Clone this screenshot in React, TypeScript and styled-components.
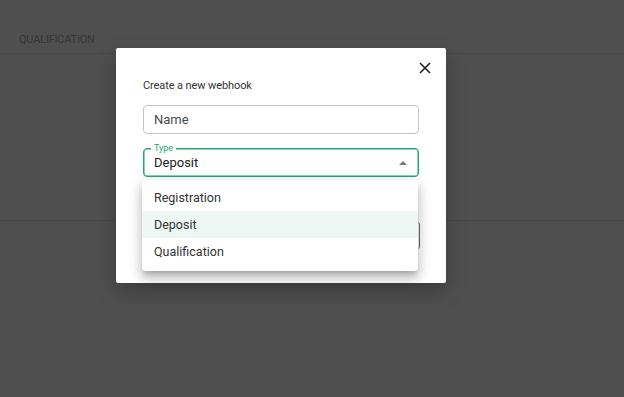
import React from 'react';
import styled, { createGlobalStyle } from 'styled-components';

const GlobalStyle = createGlobalStyle`
  html, body {
    margin: 0;
    padding: 0;
    background: #4f4f4f;
    font-family: Roboto, "Liberation Sans", Arial, sans-serif;
  }
`;

const green = '#22a673';

const Page = styled.div`
  position: relative;
  width: 624px;
  height: 397px;
  overflow: hidden;
  background: #4f4f4f;
`;

const TabBar = styled.div`
  display: flex;
  align-items: flex-end;
  height: 54px;
  padding: 0 0 7px 19px;
  box-sizing: border-box;
  border-bottom: 1px solid #474747;
`;

const Tab = styled.span`
  font-size: 11px;
  line-height: 13px;
  color: #363636;
  letter-spacing: -0.2px;
  text-transform: uppercase;
`;

const Section = styled.div`
  height: 166px;
  border-bottom: 1px solid #444444;
`;

const Dialog = styled.div`
  position: absolute;
  left: 116px;
  top: 48px;
  width: 330px;
  height: 235px;
  box-sizing: border-box;
  padding: 31px 27px 0 27px;
  background: #fff;
  border-radius: 2px;
  box-shadow: 0 8px 20px rgba(0, 0, 0, 0.25);
  display: flex;
  flex-direction: column;
`;

const CloseButton = styled.button`
  position: absolute;
  top: 12px;
  right: 13px;
  width: 16px;
  height: 16px;
  padding: 0;
  border: none;
  background: none;
  display: flex;
  align-items: center;
  justify-content: center;
`;

const Title = styled.div`
  font-size: 11px;
  line-height: 14px;
  color: #333;
  letter-spacing: -0.1px;
`;

const Field = styled.div<{ $focused?: boolean }>`
  position: relative;
  height: 29px;
  box-sizing: border-box;
  border: 1px solid ${({ $focused }) => ($focused ? green : '#c4c4c4')};
  box-shadow: ${({ $focused }) => ($focused ? `inset 0 0 0 0.5px ${green}` : 'none')};
  border-radius: 4px;
  display: flex;
  align-items: center;
  padding: 0 10px;
  margin-top: ${({ $focused }) => ($focused ? '14px' : '12px')};
`;

const FieldText = styled.span<{ $placeholder?: boolean }>`
  font-size: 13px;
  color: ${({ $placeholder }) => ($placeholder ? '#4a4a4a' : '#222')};
  flex: 1;
`;

const Legend = styled.span`
  position: absolute;
  top: -7px;
  left: 7px;
  padding: 0 3px;
  background: #fff;
  font-size: 9px;
  line-height: 12px;
  color: ${green};
`;

const Arrow = styled.span`
  width: 0;
  height: 0;
  border-left: 4px solid transparent;
  border-right: 4px solid transparent;
  border-bottom: 4px solid #777;
  margin-right: 1px;
`;

const Footer = styled.div`
  display: flex;
  justify-content: flex-end;
  margin-top: 45px;
  margin-right: -1px;
`;

const SubmitButton = styled.div`
  width: 80px;
  height: 27px;
  border-radius: 3px;
  background: #fff;
  border-right: 1px solid #6a6a6a;
`;

const Menu = styled.ul`
  position: absolute;
  left: 26px;
  top: 132px;
  width: 276px;
  margin: 0;
  padding: 4px 0 6px;
  list-style: none;
  background: #fff;
  border-radius: 4px;
  box-shadow: 0 5px 5px -3px rgba(0, 0, 0, 0.2), 0 8px 10px 1px rgba(0, 0, 0, 0.14),
    0 3px 14px 2px rgba(0, 0, 0, 0.12);
`;

const MenuItem = styled.li<{ $selected?: boolean }>`
  height: 27px;
  display: flex;
  align-items: center;
  padding: 0 12px;
  font-size: 12.5px;
  color: #333;
  background: ${({ $selected }) => ($selected ? '#edf6f2' : 'transparent')};
`;

const options = ['Registration', 'Deposit', 'Qualification'];

export default function App() {
  const selected = 'Deposit';
  return (
    <>
      <GlobalStyle />
      <Page>
        <TabBar>
          <Tab>Qualification</Tab>
        </TabBar>
        <Section />
        <Dialog>
          <CloseButton aria-label="close">
            <svg width="12" height="12" viewBox="0 0 12 12">
              <path d="M1 1 L11 11 M11 1 L1 11" stroke="#222" strokeWidth="1.6" />
            </svg>
          </CloseButton>
          <Title>Create a new webhook</Title>
          <Field>
            <FieldText $placeholder>Name</FieldText>
          </Field>
          <Field $focused>
            <Legend>Type</Legend>
            <FieldText>{selected}</FieldText>
            <Arrow />
          </Field>
          <Footer>
            <SubmitButton />
          </Footer>
          <Menu>
            {options.map((o) => (
              <MenuItem key={o} $selected={o === selected}>
                {o}
              </MenuItem>
            ))}
          </Menu>
        </Dialog>
      </Page>
    </>
  );
}
